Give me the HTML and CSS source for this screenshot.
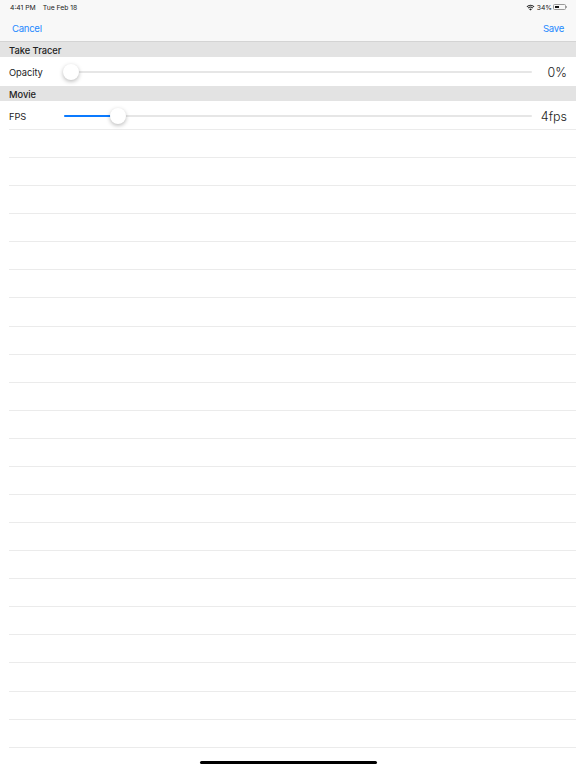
FILE: index.html
```html
<!DOCTYPE html>
<html lang="en">
<head>
<meta charset="UTF-8" />
<meta name="viewport" content="width=device-width, initial-scale=1" />
<title>Settings</title>
<link rel="stylesheet" href="styles.css">
</head>
<body>
  <header class="top-bar">
    <div class="status-bar">
      <div class="status-time">
        <span>4:41 PM</span>
        <span>Tue Feb 18</span>
      </div>
      <div class="status-icons">
        <svg class="wifi" viewBox="0 0 16 12" aria-hidden="true">
          <path d="M8 11.5 5.6 8.9a3.4 3.4 0 0 1 4.8 0Z"></path>
          <path d="M4.6 7.8 3.3 6.4a6.7 6.7 0 0 1 9.4 0l-1.3 1.4a4.8 4.8 0 0 0-6.8 0Z"></path>
          <path d="M2.3 5.4 1 4a10 10 0 0 1 14 0l-1.3 1.4a8.1 8.1 0 0 0-11.4 0Z"></path>
        </svg>
        <span>34%</span>
        <div class="battery"><div class="battery-level"></div></div>
        <div class="battery-cap"></div>
      </div>
    </div>
    <nav class="nav-bar">
      <a class="nav-link">Cancel</a>
      <a class="nav-link">Save</a>
    </nav>
  </header>

  <main>
    <h2 class="section-title">Take Tracer</h2>
    <div class="slider-row">
      <span class="row-label">Opacity</span>
      <div class="slider">
        <div class="track"></div>
        <div class="thumb thumb-opacity"></div>
      </div>
      <span class="row-value">0%</span>
    </div>

    <h2 class="section-title">Movie</h2>
    <div class="slider-row slider-row-last">
      <span class="row-label">FPS</span>
      <div class="slider">
        <div class="track"><div class="track-fill"></div></div>
        <div class="thumb thumb-fps"></div>
      </div>
      <span class="row-value">4fps</span>
    </div>

    <ul class="empty-rows">
      <li></li><li></li><li></li><li></li><li></li><li></li>
      <li></li><li></li><li></li><li></li><li></li><li></li>
      <li></li><li></li><li></li><li></li><li></li><li></li>
      <li></li><li></li><li></li><li></li>
    </ul>
  </main>

  <div class="home-indicator"></div>
</body>
</html>
```

FILE: styles.css
```css
*, *::before, *::after {
  box-sizing: border-box;
}

body {
  margin: 0;
  height: 768px;
  overflow: hidden;
  position: relative;
  background: #fff;
  color: #1c1c1e;
  font-family: Inter, 'Liberation Sans', sans-serif;
}

/* Top bar */
.top-bar {
  height: 42px;
  background: #f8f8f8;
  border-bottom: 1px solid #d4d4d4;
}

.status-bar {
  height: 14px;
  padding: 0 9px 0 10px;
  display: flex;
  justify-content: space-between;
  align-items: center;
  font-size: 6.8px;
  color: #222;
}

.status-time {
  display: flex;
  gap: 7px;
}

.status-icons {
  display: flex;
  align-items: center;
}

.wifi {
  width: 9px;
  height: 7px;
  margin-right: 2px;
  fill: #222;
}

.battery {
  width: 13px;
  height: 6px;
  margin-left: 1px;
  padding: 1px;
  border: 0.5px solid #999;
  border-radius: 1.5px;
}

.battery-level {
  width: 45%;
  height: 100%;
  background: #111;
}

.battery-cap {
  width: 1px;
  height: 2px;
  background: #aaa;
}

.nav-bar {
  height: 28px;
  padding: 0 12px;
  display: flex;
  justify-content: space-between;
  align-items: center;
}

.nav-link {
  font-size: 9.6px;
  letter-spacing: -0.3px;
  color: #2488ff;
}

/* Sections */
.section-title {
  margin: 0;
  height: 15px;
  padding-left: 9px;
  background: #e3e3e3;
  font-size: 9.3px;
  font-weight: 500;
  line-height: 17px;
  color: #222;
}

.slider-row {
  height: 29px;
  padding: 0 9px;
  display: flex;
  align-items: center;
}

.slider-row-last {
  height: 28px;
  padding-top: 1px;
}

.row-label {
  width: 54.5px;
  padding-top: 1px;
  font-size: 9.3px;
  letter-spacing: -0.05px;
}

.slider {
  flex: 1;
  position: relative;
  height: 2px;
}

.track {
  height: 2px;
  border-radius: 1px;
  background: #e6e6e6;
}

.track-fill {
  width: 47px;
  height: 2px;
  border-radius: 1px;
  background: #0a7aff;
}

.thumb {
  position: absolute;
  top: -7px;
  width: 16px;
  height: 16px;
  border-radius: 50%;
  background: #fff;
  box-shadow: 0 1.5px 4px rgb(0 0 0 / 0.28);
}

.thumb-opacity {
  left: -1px;
}

.thumb-fps {
  left: 46.5px;
}

.row-value {
  width: 35px;
  padding-top: 1px;
  font-size: 12.5px;
  font-weight: 300;
  text-align: right;
  color: #222;
}

/* Empty table rows */
.empty-rows {
  margin: 0;
  padding: 0 0 0 9px;
  list-style: none;
}

.empty-rows::before {
  content: '';
  display: block;
  height: 1px;
  background: #ebebeb;
}

.empty-rows li {
  height: 28.09px;
  border-bottom: 1px solid #ebebeb;
}

.home-indicator {
  position: absolute;
  left: 200px;
  bottom: 4px;
  width: 177px;
  height: 3px;
  border-radius: 2px;
  background: #000;
}
```
